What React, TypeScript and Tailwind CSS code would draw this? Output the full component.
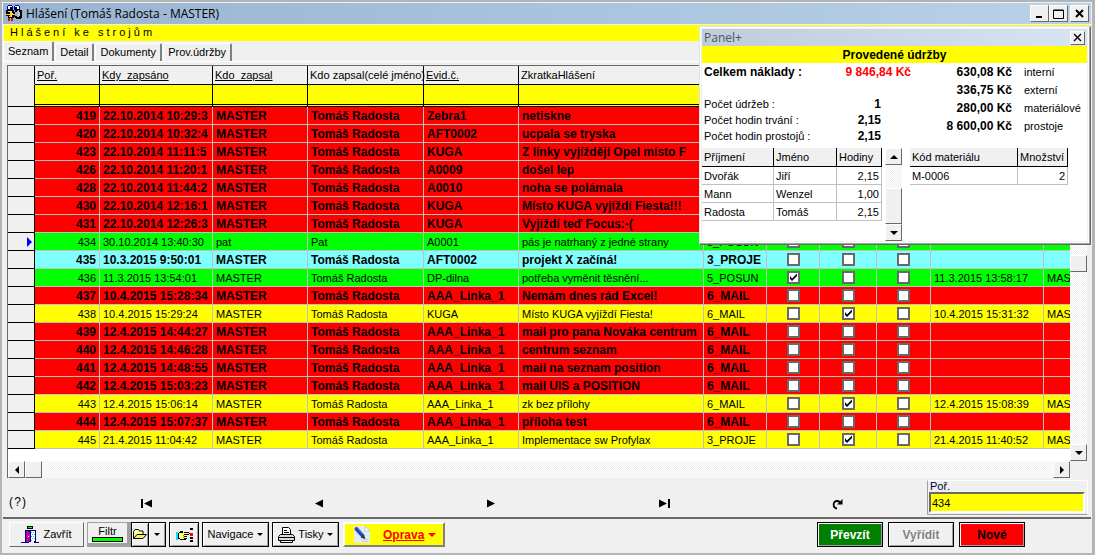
import { useState } from "react";
import type { ReactNode } from "react";
import clsx from "clsx";

type RowColor = "red" | "green" | "cyan" | "yellow";

interface Report {
  id: number;
  written: string;
  author: string;
  fullName: string;
  machine: string;
  summary: string;
  type?: string;
  flags?: [boolean, boolean, boolean];
  closed?: string;
  closedBy?: string;
  color: RowColor;
}

const ROW_COLORS: Record<RowColor, string> = {
  red: "bg-[#ff0000] font-bold text-xs",
  green: "bg-[#00ff00] text-[11px]",
  cyan: "bg-[#80ffff] font-bold text-xs",
  yellow: "bg-[#ffff00] text-[11px]"
};

const RAISED = "border border-t-white border-l-white border-r-[#696969] border-b-[#696969] bg-[#f0f0f0]";
const TRACK = "bg-[repeating-conic-gradient(#f0f0f0_0_25%,#ffffff_0_50%)] bg-[length:2px_2px]";

const T = "Tomáš Radosta";
const M = "MASTER";

const reports: Report[] = [
  { id: 419, written: "22.10.2014 10:29:3", author: M, fullName: T, machine: "Zebra1", summary: "netiskne", color: "red" },
  { id: 420, written: "22.10.2014 10:32:4", author: M, fullName: T, machine: "AFT0002", summary: "ucpala se tryska", color: "red" },
  { id: 423, written: "22.10.2014 11:11:5", author: M, fullName: T, machine: "KUGA", summary: "Z linky vyjíždějí Opel místo F", color: "red" },
  { id: 426, written: "22.10.2014 11:20:1", author: M, fullName: T, machine: "A0009", summary: "došel lep", color: "red" },
  { id: 428, written: "22.10.2014 11:44:2", author: M, fullName: T, machine: "A0010", summary: "noha se polámala", color: "red" },
  { id: 430, written: "22.10.2014 12:16:1", author: M, fullName: T, machine: "KUGA", summary: "Místo KUGA vyjíždí Fiesta!!!", color: "red" },
  { id: 431, written: "22.10.2014 12:26:3", author: M, fullName: T, machine: "KUGA", summary: "Vyjíždí teď Focus:-(", color: "red" },
  { id: 434, written: "30.10.2014 13:40:30", author: "pat", fullName: "Pat", machine: "A0001", summary: "pás je natrhaný z jedné strany", type: "5_POSUN", flags: [false, false, false], color: "green" },
  { id: 435, written: "10.3.2015 9:50:01", author: M, fullName: T, machine: "AFT0002", summary: "projekt X začíná!", type: "3_PROJE", flags: [false, false, false], color: "cyan" },
  { id: 436, written: "11.3.2015 13:54:01", author: M, fullName: T, machine: "DP-dilna", summary: "potřeba vyměnit těsnění...", type: "5_POSUN", flags: [true, false, false], closed: "11.3.2015 13:58:17", closedBy: "MAS", color: "green" },
  { id: 437, written: "10.4.2015 15:28:34", author: M, fullName: T, machine: "AAA_Linka_1", summary: "Nemám dnes rád Excel!", type: "6_MAIL", flags: [false, false, false], color: "red" },
  { id: 438, written: "10.4.2015 15:29:24", author: M, fullName: T, machine: "KUGA", summary: "Místo KUGA vyjíždí Fiesta!", type: "6_MAIL", flags: [false, true, false], closed: "10.4.2015 15:31:32", closedBy: "MAS", color: "yellow" },
  { id: 439, written: "12.4.2015 14:44:27", author: M, fullName: T, machine: "AAA_Linka_1", summary: "mail pro pana Nováka centrum", type: "6_MAIL", flags: [false, false, false], color: "red" },
  { id: 440, written: "12.4.2015 14:46:28", author: M, fullName: T, machine: "AAA_Linka_1", summary: "centrum seznam", type: "6_MAIL", flags: [false, false, false], color: "red" },
  { id: 441, written: "12.4.2015 14:48:55", author: M, fullName: T, machine: "AAA_Linka_1", summary: "mail na seznam position", type: "6_MAIL", flags: [false, false, false], color: "red" },
  { id: 442, written: "12.4.2015 15:03:23", author: M, fullName: T, machine: "AAA_Linka_1", summary: "mail UIS a POSITION", type: "6_MAIL", flags: [false, false, false], color: "red" },
  { id: 443, written: "12.4.2015 15:06:14", author: M, fullName: T, machine: "AAA_Linka_1", summary: "zk bez přílohy", type: "6_MAIL", flags: [false, true, false], closed: "12.4.2015 15:08:39", closedBy: "MAS", color: "yellow" },
  { id: 444, written: "12.4.2015 15:07:37", author: M, fullName: T, machine: "AAA_Linka_1", summary: "příloha test", type: "6_MAIL", flags: [false, false, false], color: "red" },
  { id: 445, written: "21.4.2015 11:04:42", author: M, fullName: T, machine: "AAA_Linka_1", summary: "Implementace sw Profylax", type: "3_PROJE", flags: [false, true, false], closed: "21.4.2015 11:40:52", closedBy: "MAS", color: "yellow" }
];

const columns = [
  { title: "Poř.", width: "w-[65px]", underline: true },
  { title: "Kdy  zapsáno", width: "w-[113px]", underline: true },
  { title: "Kdo  zapsal", width: "w-[95px]", underline: true },
  { title: "Kdo zapsal(celé jméno)", width: "w-[116px]" },
  { title: "Evid.č.", width: "w-[95px]", underline: true },
  { title: "ZkratkaHlášení", width: "w-[185px]" },
  { title: "", width: "w-[63px]" },
  { title: "", width: "w-[53px]" },
  { title: "", width: "w-[57px]" },
  { title: "", width: "w-[54px]" },
  { title: "", width: "w-[113px]" },
  { title: "", width: "" }
];

function AppIcon() {
  return (
    <svg width="16" height="17" viewBox="0 0 16 17" shapeRendering="crispEdges">
      <path d="M1 1h1V0h4v1h1v4H1zM8 1h1V0h4v1h1v4H8z" fill="#0000a0" />
      <path d="M2 1h4v3H2zM9 1h4v3H9z" fill="#fff" />
      <path d="M4 2h2v2H4zM9 2h2v2H9z" fill="#000" />
      <path d="M0 5h8v2h1v5H8v1H2v-2H0zM9 4h5v1h2v8h-1v1h-5v-1H9v-2h3V7H9z" fill="#000" />
      <path d="M12 5h1v2h1v4h-1v1h-2v-1h1V7h-1z" fill="#c8c8c8" />
      <path d="M2 6h4v1H2zM3 11h3v1H3zM6 8h1v1H6z" fill="#d8d8d8" />
      <path d="M0 9h9v1H0zM4 7h2v5H4z" fill="#ffe000" />
      <path d="M2 13h2v3H2zM5 13h2v3H5z" fill="#d01010" />
    </svg>
  );
}

function DoorIcon() {
  return (
    <svg width="18" height="17" viewBox="0 0 18 17" shapeRendering="crispEdges">
      <path d="M6 0h6v3H6z" fill="#000" />
      <path d="M7 1h4v1H7z" fill="#00ff00" />
      <path d="M4 4h11v12h3v1h-5V5H9v11H8v1H0v-1h4z" fill="#000080" />
      <path d="M5 5h2v1h2v9H8v1H5z" fill="#c000a0" />
      <path d="M9 5h1v11H9z" fill="#000080" />
      <path d="M10 5h4v10h-4z" fill="#fff" />
      <path d="M10 6h1v1h-1zM12 6h1v1h-1zM11 8h1v1h-1zM13 8h1v1h-1zM10 10h1v1h-1zM12 10h1v1h-1zM11 12h1v1h-1zM13 12h1v1h-1zM10 14h1v1h-1z" fill="#00d0ff" />
      <path d="M7 10h1v1H7z" fill="#fff" />
    </svg>
  );
}

function FolderIcon() {
  return (
    <svg width="14" height="13" viewBox="0 0 14 13">
      <path d="M.5 10.500V3.500L2 1.500h3.500l1 1.500h3.500v3.500" fill="#ffffa0" stroke="#000" />
      <path d="M.5 10.500L4 6.500h9.500L10 10.500z" fill="#f0f060" stroke="#000" />
    </svg>
  );
}

function HandIcon() {
  return (
    <svg width="17" height="14" viewBox="0 0 17 14" shapeRendering="crispEdges">
      <path d="M0 4h2v8H0z" fill="#00e0ff" />
      <path d="M2 5h1V4h1V3h3v1h6v1h1v1h-1v1h-3v1h1v1h-1v1h1v1h-1v1H4v-1H2z" fill="#000" />
      <path d="M3 5h4V4h1v1h5v1H8v1h2v1H8v1h2v1H8v1H4v-1H3z" fill="#ffff80" />
      <path d="M7 7h1v1H7zM7 9h1v1H7z" fill="#808000" />
      <path d="M14 0h3v2h-3zM14 9h3v2h-3zM14 12h3v2h-3z" fill="#000" />
      <path d="M14 5h3v3h-3z" fill="#ff0000" />
    </svg>
  );
}

function PrinterIcon() {
  return (
    <svg width="17" height="16" viewBox="0 0 17 16">
      <path d="M4.500 8V.5h6l2 2V8" fill="#fff" stroke="#000" />
      <path d="M6 3.500h3M6 5.500h5" stroke="#000" />
      <path d="M.5 13.500v-4l2-2h12l2 2v4z" fill="#d8d8d8" stroke="#000" />
      <path d="M1 10.500h15" stroke="#000" />
      <path d="M2.500 13.500h12v2h-12z" fill="#fff" stroke="#000" />
    </svg>
  );
}

function EditIcon() {
  return (
    <svg width="18" height="17" viewBox="0 0 18 17">
      <path d="M1 0h11l5 5v12H1z" fill="#e6ebf2" />
      <path d="M12 0v5h5zM9 13.500h6M9 15.500h6" fill="#f8fbff" stroke="#c3ccd8" />
      <path d="M3.500 3l5.500 6" stroke="#2248c0" strokeWidth="4" strokeLinecap="round" />
      <path d="M4.500 2l5.500 6" stroke="#5c86ee" />
      <path d="M7.500 11.500l5 1.500-1.500-4.500z" fill="#203060" />
    </svg>
  );
}

function Arrow({ dir, color = "black", size = 4 }: { dir: "up" | "down" | "left" | "right"; color?: string; size?: number }) {
  const w = size * 2;
  const d = {
    up: `M0 ${size}L${size} 0L${w} ${size}z`,
    down: `M0 0H${w}L${size} ${size}z`,
    left: `M${size} 0V${w}L0 ${size}z`,
    right: `M0 0V${w}L${size} ${size}z`
  }[dir];
  const vertical = dir === "up" || dir === "down";
  return (
    <svg width={vertical ? w : size} height={vertical ? size : w} className="shrink-0">
      <path d={d} fill={color} />
    </svg>
  );
}

function ScrollButton({ dir }: { dir: "up" | "down" | "left" | "right" }) {
  return (
    <button aria-label={dir} className={clsx("flex size-[17px] shrink-0 items-center justify-center", RAISED)}>
      <Arrow dir={dir} />
    </button>
  );
}

function CaptionButton({ label, small, children }: { label: string; small?: boolean; children: ReactNode }) {
  return (
    <button
      aria-label={label}
      className={clsx("flex items-center justify-center", small ? "h-[14px] w-[15px]" : "h-[17px] w-[19px]", RAISED)}
    >
      {children}
    </button>
  );
}

function CloseGlyph({ thin }: { thin?: boolean }) {
  return (
    <svg width="9" height="9" viewBox="0 0 9 9">
      <path d="M1 1l7 7M8 1L1 8" stroke="#000" strokeWidth={thin ? 1.4 : 2} />
    </svg>
  );
}

function Flag({ initial, label }: { initial: boolean; label: string }) {
  const [checked, handleChecked] = useState(initial);
  return (
    <label className="relative mx-auto block size-[13px]">
      <input
        type="checkbox"
        aria-label={label}
        checked={checked}
        onChange={(e) => handleChecked(e.target.checked)}
        className="block size-[13px] appearance-none border-2 border-[#696969] bg-white"
      />
      {checked && (
        <svg className="pointer-events-none absolute inset-0" width="13" height="13" viewBox="0 0 13 13">
          <path d="M3 5v3l2 2 5-5V2.500L5 7.500z" fill="#000" />
        </svg>
      )}
    </label>
  );
}

function ReportGrid() {
  const [selected, handleSelected] = useState(434);
  const cell = "h-[18px] overflow-hidden border-r border-b border-[#c0c0c0] p-0 pr-[3px] pl-[3px] leading-4 text-clip";

  return (
    <div className="mr-1 mb-0.5 ml-1 flex flex-1 flex-col border-t border-l border-[#696969]">
      <div className="flex flex-1">
        <div className="min-w-0 flex-1 overflow-hidden bg-white">
          <table className="w-full table-fixed border-separate border-spacing-0 whitespace-pre">
            <thead>
              <tr className="bg-[#f0f0f0] text-left text-[11px]">
                <th className="h-[19px] w-[27px] border-r border-b border-b-[#f0f0f0] p-0" />
                {columns.map((c, i) => (
                  <th key={i} className={clsx("h-[19px] border-r border-b p-0 px-0.5 leading-4 font-normal", c.width)}>
                    <span className={clsx(c.underline && "underline")}>{c.title}</span>
                  </th>
                ))}
              </tr>
              <tr>
                <td className="h-[22px] border-r border-b bg-[#f0f0f0] p-0" />
                {columns.map((c, i) => (
                  <td key={i} className="h-[22px] border-r border-b-3 border-double bg-[#ffff00] p-0">
                    <input aria-label={`Filtr ${c.title}`} className="block h-[18px] w-full bg-transparent px-1 text-[11px] outline-none" />
                  </td>
                ))}
              </tr>
            </thead>
            <tbody>
              {reports.map((r) => (
                <tr key={r.id} className={ROW_COLORS[r.color]} onClick={() => handleSelected(r.id)}>
                  <td className="h-[18px] border-r border-b bg-[#f0f0f0] p-0 pr-0.5">
                    {selected === r.id && (
                      <span className="flex justify-end">
                        <Arrow dir="right" color="#0000ff" size={5} />
                      </span>
                    )}
                  </td>
                  <td className={clsx(cell, "text-right")}>{r.id}</td>
                  <td className={cell}>{r.written}</td>
                  <td className={cell}>{r.author}</td>
                  <td className={cell}>{r.fullName}</td>
                  <td className={cell}>{r.machine}</td>
                  <td className={cell}>{r.summary}</td>
                  <td className={cell}>{r.type}</td>
                  {[0, 1, 2].map((i) => (
                    <td key={i} className={cell}>
                      {r.flags && <Flag initial={r.flags[i]} label={`${r.id}/${i + 1}`} />}
                    </td>
                  ))}
                  <td className={cell}>{r.closed}</td>
                  <td className={clsx(cell, "border-r-0")}>{r.closedBy}</td>
                </tr>
              ))}
            </tbody>
          </table>
        </div>
        <div className={clsx("flex w-[17px] flex-col", TRACK)}>
          <ScrollButton dir="up" />
          <div className="flex-1" />
          <div className={clsx("h-[17px]", RAISED)} />
          <div className="flex-1" />
          <ScrollButton dir="down" />
        </div>
      </div>
      <div className="flex bg-[#f0f0f0]">
        <div className={clsx("flex flex-1", TRACK)}>
          <ScrollButton dir="left" />
          <div className={clsx("w-[17px]", RAISED)} />
          <div className="flex-1" />
          <ScrollButton dir="right" />
        </div>
        <div className="w-[17px]" />
      </div>
    </div>
  );
}

function SummaryPanel() {
  const th = "h-[19px] border-r border-b border-black bg-[#f0f0f0] p-0 px-0.5 text-left leading-4 font-normal";
  const td = "h-[18px] border-r border-b border-[#c0c0c0] p-0 px-0.5 leading-4";
  const workers = [
    ["Dvořák", "Jiří", "2,15"],
    ["Mann", "Wenzel", "1,00"],
    ["Radosta", "Tomáš", "2,15"]
  ];
  const costs = [
    ["630,08 Kč", "interní"],
    ["336,75 Kč", "externí"],
    ["280,00 Kč", "materiálové"],
    ["8 600,00 Kč", "prostoje"]
  ];

  return (
    <section className="absolute top-6 right-px w-[392px] border border-[#e3e3e3] border-r-[#696969] border-b-[#696969] bg-white text-[11px] shadow-[inset_-1px_-1px_0_#a0a0a0]">
      <div className="m-px mr-0.5 mb-0.5 border border-[#f0f0f0]">
        <header className="flex h-[17px] items-center justify-between bg-gradient-to-r from-[#bfcddb] to-[#d7e4f2] pr-0.5 pl-0.5">
          <span className="font-['Open_Sans',sans-serif] text-xs leading-4 text-[#4a5560]">Panel+</span>
          <CaptionButton label="Zavřít panel" small>
            <CloseGlyph thin />
          </CaptionButton>
        </header>
        <h2 className="h-[17px] bg-[#ffff00] text-center text-xs leading-[18px] font-bold">Provedené údržby</h2>
        <div className="flex h-[85px] justify-between pr-[7px] pl-0.5">
          <dl className="w-[207px] leading-4">
            <div className="mb-4 flex justify-between pt-px text-xs font-bold">
              <dt>Celkem náklady :</dt>
              <dd className="text-[#ff0000]">9 846,84 Kč</dd>
            </div>
            <div className="flex justify-between pr-[30px]">
              <dt>Počet údržeb :</dt>
              <dd className="text-xs font-bold">1</dd>
            </div>
            <div className="flex justify-between pr-[30px]">
              <dt>Počet hodin trvání :</dt>
              <dd className="text-xs font-bold">2,15</dd>
            </div>
            <div className="flex justify-between pr-[30px]">
              <dt>Počet hodin prostojů :</dt>
              <dd className="text-xs font-bold">2,15</dd>
            </div>
          </dl>
          <ul className="leading-[18px]">
            {costs.map(([value, label]) => (
              <li key={label} className="flex justify-end gap-3">
                <span className="text-xs leading-[18px] font-bold">{value}</span>
                <span className="w-14">{label}</span>
              </li>
            ))}
          </ul>
        </div>
        <div className="flex h-[93px]">
          <div className="w-[180px]">
            <table className="w-full table-fixed border-separate border-spacing-0">
              <thead>
                <tr>
                  <th className={clsx(th, "w-[72px]")}>Příjmení</th>
                  <th className={clsx(th, "w-[63px]")}>Jméno</th>
                  <th className={th}>Hodiny</th>
                </tr>
              </thead>
              <tbody>
                {workers.map(([surname, name, hours]) => (
                  <tr key={surname}>
                    <td className={td}>{surname}</td>
                    <td className={td}>{name}</td>
                    <td className={clsx(td, "text-right")}>{hours}</td>
                  </tr>
                ))}
              </tbody>
            </table>
          </div>
          <div className={clsx("ml-[3px] flex w-[17px] flex-col", TRACK)}>
            <ScrollButton dir="up" />
            <div className="flex-1" />
            <div className={clsx("h-9", RAISED)} />
            <ScrollButton dir="down" />
          </div>
          <div className="ml-2 w-[158px]">
            <table className="w-full table-fixed border-separate border-spacing-0">
              <thead>
                <tr>
                  <th className={clsx(th, "w-[108px]")}>Kód materiálu</th>
                  <th className={clsx(th, "overflow-hidden")}>Množství</th>
                </tr>
              </thead>
              <tbody>
                <tr>
                  <td className={td}>M-0006</td>
                  <td className={clsx(td, "text-right")}>2</td>
                </tr>
              </tbody>
            </table>
          </div>
        </div>
      </div>
    </section>
  );
}

function Tabs() {
  const [active, handleActive] = useState("Seznam");
  return (
    <nav className="flex h-6 items-start text-[11px]">
      <div className="flex h-[21px] w-full items-end border-b border-white">
        {["Seznam", "Detail", "Dokumenty", "Prov.údržby"].map((tab) => (
          <button
            key={tab}
            onClick={() => handleActive(tab)}
            className={clsx(
              "mr-px rounded-t-xs border-t border-r-2 border-l border-t-white border-r-[#808080] border-l-white px-1 pb-0.5 leading-4",
              active === tab ? "h-5" : "h-[18px]"
            )}
          >
            {tab}
          </button>
        ))}
      </div>
    </nav>
  );
}

function NavigatorBar() {
  return (
    <div className="flex h-[37px] items-start pr-[3px] pl-1 text-[11px]">
      <button className="mt-3.5 w-[53px] pl-0.5 text-left text-xs tracking-widest">(?)</button>
      <div className="flex flex-1 pt-[19px]">
        <button aria-label="První" className="flex flex-1 justify-center">
          <svg width="11" height="9">
            <path d="M0 0h2v9H0zM11 .5v8L3 4.500z" />
          </svg>
        </button>
        <button aria-label="Předchozí" className="flex flex-1 justify-center">
          <svg width="9" height="9">
            <path d="M8 .5v8L0 4.500z" />
          </svg>
        </button>
        <button aria-label="Další" className="flex flex-1 justify-center">
          <svg width="9" height="9">
            <path d="M0 .5v8L8 4.500z" />
          </svg>
        </button>
        <button aria-label="Poslední" className="flex flex-1 justify-center">
          <svg width="11" height="9">
            <path d="M9 0h2v9H9zM0 .5v8L8 4.500z" />
          </svg>
        </button>
        <button aria-label="Obnovit" className="flex flex-1 justify-center">
          <svg width="11" height="11" viewBox="0 0 11 11">
            <path d="M5 9.500C.5 9 .5 2 5 2c2 0 3 1 3.500 2.500" fill="none" stroke="#000" strokeWidth="1.800" />
            <path d="M10.500 0v5.500H5z" />
          </svg>
        </button>
      </div>
      <div className="ml-[3px] w-[161px] border border-[#a0a0a0] border-t-white border-r-white pr-0.5 pb-px pl-px">
        <label htmlFor="por" className="block pl-px text-[11px] leading-[11px] text-[#000040]">
          Poř.
        </label>
        <input
          id="por"
          defaultValue="434"
          className="block h-[21px] w-full border-2 border-t-[#696969] border-r-white border-b-white border-l-[#696969] bg-[#ffff00] pl-px text-[11px] leading-4 outline-none"
        />
      </div>
    </div>
  );
}

function Toolbar() {
  const bevel = "shadow-[inset_1px_1px_0_#fff,inset_-1px_-1px_0_#a0a0a0]";
  const boxed = clsx("flex h-[25px] items-center justify-center border border-black bg-[#f0f0f0]", bevel);
  return (
    <footer className="flex h-9 items-start border-t-2 border-[#696969] pr-[66px] pl-1.5 text-xs">
      <div className="mt-[3px] flex items-start">
        <button className={clsx("flex h-[25px] w-[75px] items-center justify-center gap-1 text-[11px]", RAISED)}>
          <DoorIcon />
          Zavřít
        </button>
        <button className="ml-[3px] h-[25px] w-[44px] border border-r-4 border-b-4 border-[#a0a0a0] bg-[#f0f0f0] px-1 text-[11px] leading-3">
          Filtr
          <span className="block h-[5px] border border-black bg-[#00ff00]" />
        </button>
        <button aria-label="Otevřít filtr" className={clsx(boxed, "w-[18px]")}>
          <FolderIcon />
        </button>
        <button aria-label="Výběr filtru" className={clsx(boxed, "-ml-px w-[18px]")}>
          <Arrow dir="down" size={3} />
        </button>
        <button aria-label="Ukázat" className={clsx(boxed, "ml-[3px] w-[30px]")}>
          <HandIcon />
        </button>
        <button className={clsx(boxed, "ml-[3px] w-[67px] gap-1 text-[11px]")}>
          Navigace
          <Arrow dir="down" size={3} />
        </button>
        <button className={clsx(boxed, "ml-[3px] w-[67px] gap-[3px] text-[11px]")}>
          <PrinterIcon />
          Tisky
          <Arrow dir="down" size={3} />
        </button>
        <button className="ml-1 flex h-[25px] w-[102px] items-center gap-1 border-2 border-t-white border-r-[#808080] border-b-[#808080] border-l-white bg-[#ffff00] pl-2 font-bold text-[#ff0000]">
          <EditIcon />
          <span className="ml-2 underline">Oprava</span>
          <Arrow dir="down" color="#ff0000" />
        </button>
      </div>
      <div className="mt-[3px] ml-auto flex gap-[5px] font-bold">
        <button className={clsx("h-[25px] w-[66px] border border-black bg-[#008000] text-white", bevel)}>Převzít</button>
        <button className={clsx(boxed, "w-[66px] text-[#808080] text-shadow-[1px_1px_0_#fff]")}>Vyřídit</button>
        <button className={clsx("h-[25px] w-[66px] border border-black bg-[#ff0000]", bevel)}>Nové</button>
      </div>
    </footer>
  );
}

function App() {
  return (
    <main className="relative flex min-h-screen w-full flex-col border-2 border-r-3 border-[#b4b4b4] bg-[#f0f0f0] pt-px pr-px pl-px font-['Liberation_Sans',Arial,sans-serif] text-black">
      <header className="mb-px flex h-[21px] items-center gap-1 bg-gradient-to-r from-[#99b4d1] to-[#b9d1ea] pr-0.5 pl-[3px]">
        <AppIcon />
        <h1 className="font-['Open_Sans',sans-serif] text-xs leading-5">Hlášení (Tomáš Radosta - MASTER)</h1>
        <div className="ml-auto flex">
          <CaptionButton label="Minimalizovat">
            <svg width="9" height="9">
              <path d="M1 7h6v2H1z" />
            </svg>
          </CaptionButton>
          <CaptionButton label="Maximalizovat">
            <svg width="11" height="10">
              <path d="M.5 1h10v8.500H.5zM.5 1.500h10" fill="none" stroke="#000" />
            </svg>
          </CaptionButton>
          <div className="ml-0.5">
            <CaptionButton label="Zavřít okno">
              <CloseGlyph />
            </CaptionButton>
          </div>
        </div>
      </header>
      <div className="ml-px h-4 bg-[#ffff00] pl-1.5 text-[11px] leading-[15px] tracking-[3px]">Hlášení ke strojům</div>
      <Tabs />
      <ReportGrid />
      <NavigatorBar />
      <Toolbar />
      <SummaryPanel />
    </main>
  );
}

export default App;
